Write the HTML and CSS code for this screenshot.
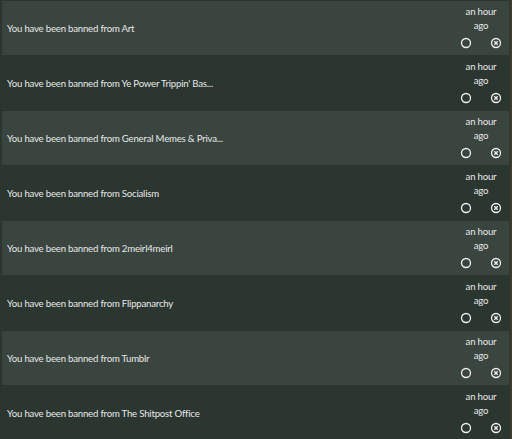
FILE: index.html
```html
<!DOCTYPE html>
<html>
<head>
<meta charset="utf-8">
<link rel="stylesheet" href="styles.css">
</head>
<body>
<div class="list">
  <div class="row alt"><div class="msg">You have been banned from Art</div><div class="side"><div class="time">an hour<br>ago</div><div class="icons"><svg class="ico" viewBox="0 0 12 12"><circle cx="6" cy="6" r="4.5"/></svg><svg class="ico" viewBox="0 0 12 12"><circle cx="6" cy="6" r="4.5"/><path d="M4.3 4.3L7.7 7.7M7.7 4.3L4.3 7.7"/></svg></div></div></div>
  <div class="row"><div class="msg">You have been banned from Ye Power Trippin' Bas...</div><div class="side"><div class="time">an hour<br>ago</div><div class="icons"><svg class="ico" viewBox="0 0 12 12"><circle cx="6" cy="6" r="4.5"/></svg><svg class="ico" viewBox="0 0 12 12"><circle cx="6" cy="6" r="4.5"/><path d="M4.3 4.3L7.7 7.7M7.7 4.3L4.3 7.7"/></svg></div></div></div>
  <div class="row alt"><div class="msg">You have been banned from General Memes &amp; Priva...</div><div class="side"><div class="time">an hour<br>ago</div><div class="icons"><svg class="ico" viewBox="0 0 12 12"><circle cx="6" cy="6" r="4.5"/></svg><svg class="ico" viewBox="0 0 12 12"><circle cx="6" cy="6" r="4.5"/><path d="M4.3 4.3L7.7 7.7M7.7 4.3L4.3 7.7"/></svg></div></div></div>
  <div class="row"><div class="msg">You have been banned from Socialism</div><div class="side"><div class="time">an hour<br>ago</div><div class="icons"><svg class="ico" viewBox="0 0 12 12"><circle cx="6" cy="6" r="4.5"/></svg><svg class="ico" viewBox="0 0 12 12"><circle cx="6" cy="6" r="4.5"/><path d="M4.3 4.3L7.7 7.7M7.7 4.3L4.3 7.7"/></svg></div></div></div>
  <div class="row alt"><div class="msg">You have been banned from 2meirl4meirl</div><div class="side"><div class="time">an hour<br>ago</div><div class="icons"><svg class="ico" viewBox="0 0 12 12"><circle cx="6" cy="6" r="4.5"/></svg><svg class="ico" viewBox="0 0 12 12"><circle cx="6" cy="6" r="4.5"/><path d="M4.3 4.3L7.7 7.7M7.7 4.3L4.3 7.7"/></svg></div></div></div>
  <div class="row"><div class="msg">You have been banned from Flippanarchy</div><div class="side"><div class="time">an hour<br>ago</div><div class="icons"><svg class="ico" viewBox="0 0 12 12"><circle cx="6" cy="6" r="4.5"/></svg><svg class="ico" viewBox="0 0 12 12"><circle cx="6" cy="6" r="4.5"/><path d="M4.3 4.3L7.7 7.7M7.7 4.3L4.3 7.7"/></svg></div></div></div>
  <div class="row alt"><div class="msg">You have been banned from Tumblr</div><div class="side"><div class="time">an hour<br>ago</div><div class="icons"><svg class="ico" viewBox="0 0 12 12"><circle cx="6" cy="6" r="4.5"/></svg><svg class="ico" viewBox="0 0 12 12"><circle cx="6" cy="6" r="4.5"/><path d="M4.3 4.3L7.7 7.7M7.7 4.3L4.3 7.7"/></svg></div></div></div>
  <div class="row"><div class="msg">You have been banned from The Shitpost Office</div><div class="side"><div class="time">an hour<br>ago</div><div class="icons"><svg class="ico" viewBox="0 0 12 12"><circle cx="6" cy="6" r="4.5"/></svg><svg class="ico" viewBox="0 0 12 12"><circle cx="6" cy="6" r="4.5"/><path d="M4.3 4.3L7.7 7.7M7.7 4.3L4.3 7.7"/></svg></div></div></div>
</div>
</body>
</html>
```
FILE: styles.css
```css
html, body {
  margin: 0;
  padding: 0;
  background: #2b3631;
  height: 100%;
  overflow: hidden;
}
.list {
  width: 512px;
  border-right: 2px solid #3d3a2e;
  height: 439px;
  padding: 0 1px 0 2px;
  box-sizing: border-box;
  font-family: Lato, sans-serif;
  font-size: 9.6px;
  letter-spacing: -0.2px;
  color: #e8e8e8;
}
.row {
  display: flex;
  align-items: center;
  height: 55px;
  border-top: 1px solid #2b3631;
  box-sizing: border-box;
}
.row.alt {
  background: #3a4540;
}
.msg {
  flex: 1;
  padding-left: 5px;
}
.side {
  width: 42px;
  margin-right: 7px;
  padding-bottom: 2px;
  display: flex;
  flex-direction: column;
  align-items: center;
}
.time {
  text-align: center;
  line-height: 14px;
  margin-bottom: 4px;
}
.icons {
  display: flex;
  width: 100%;
  justify-content: space-between;
}
.ico {
  width: 12px;
  height: 12px;
  fill: none;
  stroke: #f0f0f0;
  stroke-width: 1.3;
}
```
